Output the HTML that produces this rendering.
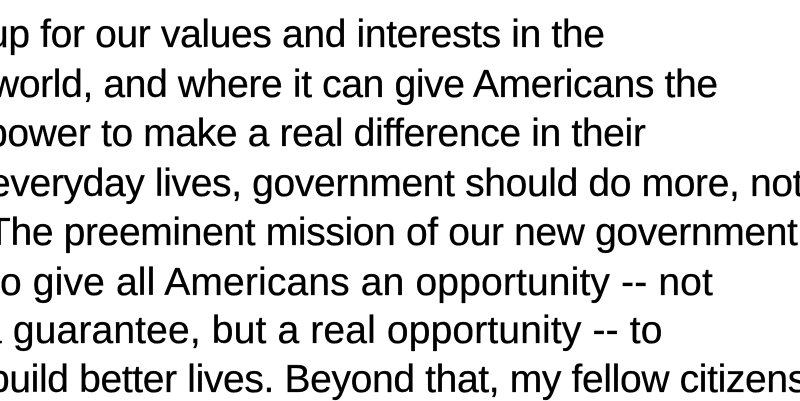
<!DOCTYPE html>
<html><head><meta charset="utf-8"><style>
html,body{margin:0;padding:0;background:#fff;width:800px;height:400px;overflow:hidden}
.l{position:absolute;white-space:nowrap;font-family:"Liberation Sans",sans-serif;font-size:39px;color:#000;line-height:40px;letter-spacing:-0.35px;-webkit-text-stroke:0.3px #000}
</style></head><body>
<div class="l" style="top:15px;left:-13px">up for our values and interests in the</div>
<div class="l" style="top:65px;left:-9px">world, and where it can give Americans the</div>
<div class="l" style="top:114px;left:-14px">power to make a real difference in their</div>
<div class="l" style="top:164px;left:-11px">everyday lives, government should do more, not</div>
<div class="l" style="top:213px;left:-13px">The preeminent mission of our new government</div>
<div class="l" style="top:263px;left:-11px;letter-spacing:0.15px">to give all Americans an opportunity -- not</div>
<div class="l" style="top:311px;left:-20px;letter-spacing:0.15px">a guarantee, but a real opportunity -- to</div>
<div class="l" style="top:360px;left:-12px">build better lives. Beyond that, my fellow citizens</div>
</body></html>
